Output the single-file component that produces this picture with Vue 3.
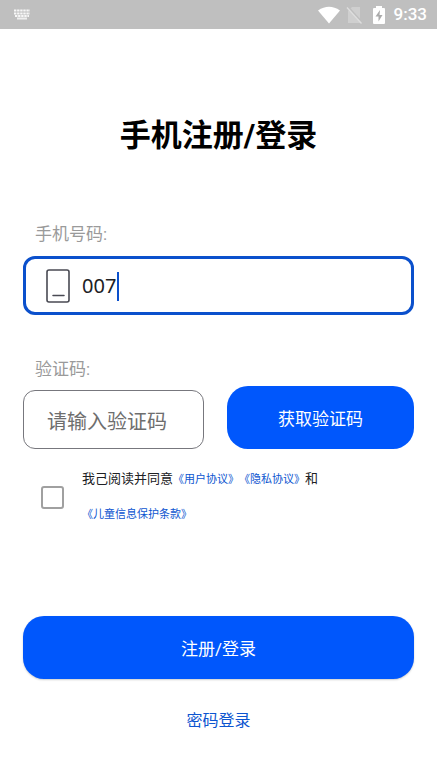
<script setup>
import { ref } from 'vue'

const phone = ref('007')
const code = ref('')
const agreed = ref(false)
</script>

<template>
  <div class="screen">
    <header class="status">
      <svg class="keyboard" width="18" height="11" viewBox="0 0 18 11" aria-hidden="true">
        <path d="M1 1.500h16M1 4.500h16M2 7h14" stroke="#f7f7f7" stroke-width="2" stroke-dasharray="2.400 .700" fill="none" />
        <path d="M4 9.500h10" stroke="#eee" stroke-width="2" />
      </svg>
      <div class="indicators">
        <svg width="22" height="18" viewBox="0 0 22 18" aria-hidden="true">
          <path d="M0 4.500Q11-3 22 4.500L11 17.500Z" fill="#fff" />
        </svg>
        <svg class="sim" width="17" height="18" viewBox="0 0 17 18" aria-hidden="true">
          <path d="M6 1h8v16H2V5Z" fill="#cfcfcf" />
          <path d="M2 1l14 15.500" stroke="#bfbfbf" stroke-width="2" />
          <path d="M1 1.500l14.500 16" stroke="#dedede" stroke-width="1.300" />
        </svg>
        <svg class="battery" width="12" height="18" viewBox="0 0 12 18" aria-hidden="true">
          <path d="M3 0h6v2h2q1 0 1 1v14q0 1-1 1H1q-1 0-1-1V3q0-1 1-1h2Z" fill="#fff" />
          <path d="M7 4L2.500 10.500h3V15.500L9.500 9h-3Z" fill="#aaa" />
        </svg>
        <span class="clock">9:33</span>
      </div>
    </header>

    <main class="content">
      <h1>手机注册/登录</h1>

      <label class="caption" for="phone">手机号码:</label>
      <div class="phone-box">
        <svg width="25" height="34" viewBox="0 0 25 34" fill="none" stroke="#494a53" aria-hidden="true">
          <rect x="1" y="1" width="22" height="32" rx="2" stroke-width="1.600" />
          <path d="M7 26.500h11" stroke-width="1.500" stroke-linecap="round" />
        </svg>
        <div class="phone-entry">
          <input id="phone" v-model="phone" type="tel" />
          <span class="caret"></span>
        </div>
      </div>

      <label class="caption code-caption" for="code">验证码:</label>
      <div class="code-row">
        <input id="code" v-model="code" class="code-input" placeholder="请输入验证码" />
        <button class="primary" type="button">获取验证码</button>
      </div>

      <div class="agreement">
        <input id="agree" v-model="agreed" type="checkbox" />
        <div class="terms">
          <label for="agree">我己阅读并同意</label><a href="#user">《用户协议》</a><a href="#privacy">《隐私协议》</a><span>和</span><br /><a href="#children">《儿童信息保护条款》</a>
        </div>
      </div>

      <button class="primary submit" type="button">注册/登录</button>
      <a class="password-login" href="#password">密码登录</a>
    </main>
  </div>
</template>

<style>
body {
  margin: 0;
  background: #fff;
}
</style>

<style scoped>
.screen {
  font-family: Roboto, "Noto Sans CJK SC", sans-serif;
  color: #202124;
}
input,
button {
  box-sizing: border-box;
  margin: 0;
  font-family: inherit;
}
a {
  color: #0c55d0;
  text-decoration: none;
}
.status {
  display: flex;
  align-items: center;
  justify-content: space-between;
  height: 29px;
  padding: 0 10px 0 13px;
  background: #bfbfbf;
}
.indicators {
  display: flex;
  align-items: center;
}
.sim {
  margin-left: 6px;
}
.battery {
  margin-left: 10px;
}
.clock {
  margin-left: 9px;
  color: #fff;
  font-size: 17px;
  font-weight: 500;
  line-height: 29px;
}
.content {
  display: flex;
  flex-direction: column;
  padding: 85px 23px 24px;
}
h1 {
  margin: 0;
  color: #000;
  font-size: 31px;
  font-weight: 700;
  line-height: 44px;
  text-align: center;
}
.caption {
  margin: 64px 0 9px 12px;
  color: #9a9a9a;
  font-size: 17px;
  line-height: 25px;
}
.phone-box {
  display: flex;
  align-items: center;
  gap: 11px;
  box-sizing: border-box;
  height: 59px;
  padding: 0 20px;
  border: 3px solid #0b50cc;
  border-radius: 12px;
}
.phone-entry {
  position: relative;
  flex: 1;
}
.phone-entry input {
  width: 100%;
  height: 40px;
  padding: 0;
  border: 0;
  outline: 0;
  background: transparent;
  color: #202124;
  font-family: "Noto Sans", sans-serif;
  font-size: 20px;
}
.caret {
  position: absolute;
  left: 35px;
  top: 6px;
  width: 2px;
  height: 29px;
  background: #0b50cc;
}
.code-caption {
  margin: 42px 0 4px 12px;
}
.code-row {
  display: grid;
  grid-template-columns: 181fr 187fr;
  align-items: center;
  gap: 23px;
}
.code-input {
  width: 100%;
  height: 59px;
  margin-top: 4px;
  padding: 4px 23px 0;
  border: 1px solid #77777d;
  border-radius: 12px;
  font-size: 20px;
}
.code-input::placeholder {
  color: #6e6e6e;
}
.primary {
  height: 63px;
  padding: 0;
  border: 0;
  border-radius: 21px;
  background: #0057fc;
  color: #fff;
  font-size: 17px;
}
.agreement {
  display: flex;
  align-items: center;
  gap: 18px;
  margin: 13px 0 0 18px;
}
.agreement input {
  appearance: none;
  width: 23px;
  height: 23px;
  border: 2px solid #a0a0a0;
  border-radius: 3px;
}
.agreement input:checked {
  background: #0057fc;
}
.terms {
  font-size: 13px;
  line-height: 34px;
  text-spacing-trim: space-all;
}
.terms a {
  font-size: 11px;
}
.submit {
  margin-top: 84px;
  box-shadow: 0 1px 2px #0003;
}
.password-login {
  align-self: center;
  margin-top: 30px;
  font-size: 16px;
  line-height: 24px;
}
</style>
